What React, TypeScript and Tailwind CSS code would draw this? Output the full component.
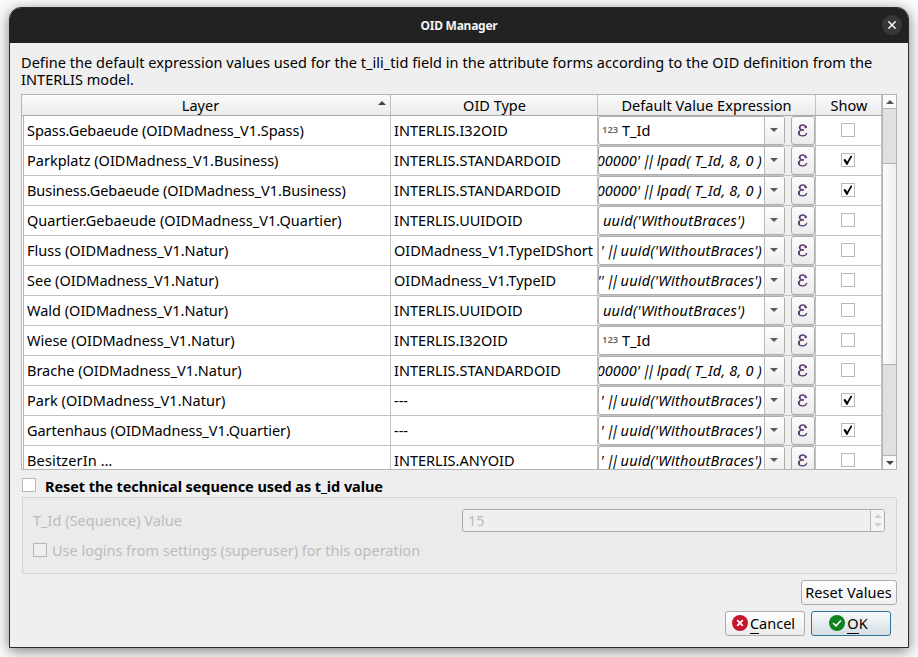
import type { ReactNode } from "react";

type Kind = "field" | "lpad" | "uuid" | "prefixed";

interface Row {
  layer: string;
  layerClass?: string;
  oid: string;
  kind: Kind;
  prefix?: string;
  show: boolean;
}

const rows: Row[] = [
  { layer: "Spass.Gebaeude (OIDMadness_V1.Spass)", layerClass: "tracking-[-0.06px]", oid: "INTERLIS.I32OID", kind: "field", show: false },
  { layer: "Parkplatz (OIDMadness_V1.Business)", oid: "INTERLIS.STANDARDOID", kind: "lpad", show: true },
  { layer: "Business.Gebaeude (OIDMadness_V1.Business)", layerClass: "tracking-[-0.06px]", oid: "INTERLIS.STANDARDOID", kind: "lpad", show: true },
  { layer: "Quartier.Gebaeude (OIDMadness_V1.Quartier)", layerClass: "tracking-[0.04px]", oid: "INTERLIS.UUIDOID", kind: "uuid", show: false },
  { layer: "Fluss (OIDMadness_V1.Natur)", oid: "OIDMadness_V1.TypeIDShort", kind: "prefixed", prefix: "'", show: false },
  { layer: "See (OIDMadness_V1.Natur)", oid: "OIDMadness_V1.TypeID", kind: "prefixed", prefix: "''", show: false },
  { layer: "Wald (OIDMadness_V1.Natur)", oid: "INTERLIS.UUIDOID", kind: "uuid", show: false },
  { layer: "Wiese (OIDMadness_V1.Natur)", oid: "INTERLIS.I32OID", kind: "field", show: false },
  { layer: "Brache (OIDMadness_V1.Natur)", oid: "INTERLIS.STANDARDOID", kind: "lpad", show: false },
  { layer: "Park (OIDMadness_V1.Natur)", layerClass: "tracking-[0.02px]", oid: "---", kind: "prefixed", prefix: "'", show: true },
  { layer: "Gartenhaus (OIDMadness_V1.Quartier)", layerClass: "tracking-[-0.04px]", oid: "---", kind: "prefixed", prefix: "'", show: true },
  { layer: "BesitzerIn …", layerClass: "tracking-[0.15px]", oid: "INTERLIS.ANYOID", kind: "prefixed", prefix: "'", show: false },
];

function Arrow({ up = false, className = "" }: { up?: boolean; className?: string }) {
  return (
    <svg width="8" height="4" viewBox="0 0 8 4" className={className} fill="currentColor">
      <path d={up ? "M0 4 L4 0 L8 4Z" : "M0 0 L8 0 L4 4Z"} />
    </svg>
  );
}

function CheckBox({ checked = false, className = "bg-white border-[#b9b9b9]" }: { checked?: boolean; className?: string }) {
  return (
    <span className={`flex size-3.5 shrink-0 items-center justify-center border ${className}`}>
      {checked && (
        <svg width="10" height="10" viewBox="0 0 10 10" fill="none" stroke="#000" strokeLinecap="round" strokeLinejoin="round">
          <path d="M1.8 5.2 L4 8.6" strokeWidth="2.3" />
          <path d="M4 8.6 L8.2 1.5" strokeWidth="1.7" />
        </svg>
      )}
    </span>
  );
}

function Concat() {
  return <span className="ml-[3px] mr-[5px] inline-block -skew-x-12 not-italic tracking-[-3.6px]">||</span>;
}

function Expression({ row }: { row: Row }) {
  if (row.kind === "field") {
    return (
      <>
        <span className="mb-0.5 w-5 shrink-0 text-[9.5px] font-semibold leading-none text-[#666]">123</span>
        <span>T_Id</span>
      </>
    );
  }
  if (row.kind === "uuid") {
    return <span className="shrink-0 pl-px italic tracking-[0.22px]">uuid('WithoutBraces')</span>;
  }
  return (
    <span className="flex shrink-0 italic">
      <span>{row.kind === "lpad" ? "00000'" : row.prefix}</span>
      <Concat />
      <span className="tracking-[0.2px]">{row.kind === "lpad" ? "lpad( T_Id, 8, 0 )" : "uuid('WithoutBraces')"}</span>
    </span>
  );
}

function Combo({ row }: { row: Row }) {
  const rightAligned = row.kind === "lpad" || row.kind === "prefixed";
  return (
    <div className="flex h-[29px] w-[187px] rounded-[3px] border border-[#adadad] bg-white">
      <div className={`flex w-[165px] shrink-0 items-center overflow-hidden whitespace-nowrap ${rightAligned ? "justify-end pr-0.5" : "pl-[3px]"}`}>
        <Expression row={row} />
      </div>
      <div className="flex flex-1 items-center justify-center rounded-r-[2px] border-l border-[#b9b9b9] bg-linear-to-b from-white to-[#ececec] pr-0.5">
        <Arrow className="mb-px text-[#595959]" />
      </div>
    </div>
  );
}

function EpsilonIcon() {
  return (
    <svg width="11" height="13" viewBox="0 0 11 13" className="mb-px mr-0.5" fill="none" stroke="#5d3b73" strokeLinecap="round">
      <path d="M8.8 3.2 C8.4 1.5 7.2 1 5.8 1 C3.8 1 2.6 2 2.6 3.5 C2.6 5.2 4 5.9 6.4 5.9" strokeWidth="1.3" />
      <path d="M6.4 5.9 C3.4 5.9 1.8 6.9 1.8 8.9 C1.8 10.8 3.4 11.8 5.6 11.8 C7.8 11.8 9.2 10.9 9.6 9.3" strokeWidth="1.3" />
      <path d="M2.7 2.9 V4.1 M2 8 V9.8" strokeWidth="1.9" />
      <circle cx="8.6" cy="3.1" r="0.8" fill="#5d3b73" />
    </svg>
  );
}

function HeaderCell({ children, className }: { children: ReactNode; className: string }) {
  return <div className={`flex items-center justify-center ${className}`}>{children}</div>;
}

function PushButton({ children, className }: { children: ReactNode; className: string }) {
  return <button className={`flex h-[25px] items-center justify-center rounded-[3px] border ${className}`}>{children}</button>;
}

export default function App() {
  return (
    <div className="h-[657px] w-[918px] overflow-hidden bg-[#fbfbfb] pl-[9px] pt-[7px] font-['Noto_Sans',sans-serif] text-[14.5px] leading-[17px] text-black">
      <div className="flex h-[641px] w-[900px] flex-col overflow-hidden rounded-t-xl border border-[#2b2b2b] bg-[#efefef] shadow-[0_3px_14px_rgba(0,0,0,0.5)]">
        <header className="grid h-[35px] shrink-0 grid-cols-[40px_1fr_40px] items-center bg-[#222]">
          <span />
          <h1 className="text-center text-[12px] font-bold tracking-[-0.25px] text-[#f4f4f4]">OID Manager</h1>
          <button className="mb-px ml-[14px] flex size-5 items-center justify-center rounded-full bg-[#383838]">
            <svg width="8" height="8" viewBox="0 0 8 8" stroke="#fff" strokeWidth="1.4">
              <path d="M0.4 0.4 L7.6 7.6 M7.6 0.4 L0.4 7.6" />
            </svg>
          </button>
        </header>

        <main className="flex flex-1 flex-col px-[11px] pt-[11px]">
          <p className="h-10 w-[860px] tracking-[0.045px]">
            Define the default expression values used for the t_ili_tid field in the attribute forms according to the OID definition from the
            INTERLIS model.
          </p>

          <section className="flex h-[376px] shrink-0 border border-[#b3b3b3] bg-white">
            <div className="flex w-[860px] shrink-0 flex-col overflow-hidden">
              <div className="flex h-[21px] shrink-0 border-b border-[#a9a9a9] bg-linear-to-b from-[#fafafa] to-[#ebebeb]">
                <HeaderCell className="w-[369px] border-r border-[#c2c2c2] pr-1">
                  <span className="flex-1 pl-px text-center">Layer</span>
                  <Arrow up className="mb-1 text-[#444]" />
                </HeaderCell>
                <HeaderCell className="w-[207px] border-r border-[#c2c2c2] pl-px">OID Type</HeaderCell>
                <HeaderCell className="w-[218px] border-r border-[#c2c2c2] tracking-[0.06px]">Default Value Expression</HeaderCell>
                <HeaderCell className="w-[66px] border-r border-[#c2c2c2] pl-px">Show</HeaderCell>
              </div>
              <div className="ml-px min-h-0 flex-1 overflow-hidden border-l border-[#b3b3b3]">
                {rows.map((row, i) => (
                  <div key={i} className="flex h-[30px]">
                    <div className="flex w-[367px] shrink-0 items-center whitespace-nowrap border-b border-r border-[#c2c2c2] pl-[3px]">
                      <span className={row.layerClass}>{row.layer}</span>
                    </div>
                    <div className="flex w-[207px] shrink-0 items-center whitespace-nowrap border-b border-r border-[#c2c2c2] pl-[3px]">
                      <span>{row.oid}</span>
                    </div>
                    <div className="flex w-[218px] shrink-0 justify-between border-b border-r border-[#c2c2c2] bg-[#efefef]">
                      <Combo row={row} />
                      <button className="flex h-[29px] w-6 items-center justify-center rounded-[3px] border border-[#adadad] bg-linear-to-b from-[#fcfcfc] to-[#ebebeb]">
                        <EpsilonIcon />
                      </button>
                    </div>
                    <div className="flex w-[66px] shrink-0 items-center justify-center border-b border-r border-[#c2c2c2] pb-px pr-px">
                      <CheckBox checked={row.show} />
                    </div>
                  </div>
                ))}
              </div>
            </div>
            <div className="flex w-3.5 flex-col border-l border-[#b3b3b3]">
              <div className="flex h-3.5 items-center justify-center border-b border-[#b3b3b3] bg-[#fafafa]">
                <Arrow up className="text-[#555]" />
              </div>
              <div className="h-[54px] bg-[#e0e0e0]" />
              <div className="h-[202px] border-y border-[#b3b3b3] bg-linear-to-r from-[#fafafa] to-[#efefef]" />
              <div className="flex-1 bg-[#e0e0e0]" />
              <div className="flex h-3.5 items-center justify-center border-t border-[#b3b3b3] bg-[#fafafa]">
                <Arrow className="text-[#444]" />
              </div>
            </div>
          </section>

          <label className="flex h-[27px] shrink-0 items-center gap-[9px] whitespace-nowrap pl-px pt-1.5 font-bold">
            <CheckBox className="mb-[3px] border-[#b9b9b9] bg-white" />
            <span className="tracking-[-0.08px]">Reset the technical sequence used as t_id value</span>
          </label>

          <section className="ml-px h-[77px] shrink-0 rounded-[2px] border border-[#d3d3d3] bg-[#ebebeb] pl-2.5 pr-[11px] pt-[11px] text-[#bcbcbc]">
            <div className="flex h-[23px] items-center justify-between">
              <span className="tracking-[0.03px]">T_Id (Sequence) Value</span>
              <div className="flex h-[23px] w-[423px] rounded-[3px] border border-[#ababab] bg-[#efefef]">
                <span className="flex flex-1 items-center pl-[5px]">15</span>
                <div className="flex w-3.5 flex-col items-center justify-center gap-[5px] rounded-r-[2px] border-l border-[#b9b9b9] bg-[#f4f4f4] text-[#cfcfcf]">
                  <Arrow up />
                  <Arrow />
                </div>
              </div>
            </div>
            <label className="mt-[7px] flex h-[22px] items-center gap-[5px] whitespace-nowrap">
              <CheckBox className="border-[#b9b9b9] bg-[#efefef]" />
              <span className="tracking-[-0.02px]">Use logins from settings (superuser) for this operation</span>
            </label>
          </section>

          <div className="mt-1.5 flex justify-end">
            <PushButton className="w-24 border-[#ababab] bg-linear-to-b from-white to-[#f0f0f0] pr-px tracking-[0.08px]">Reset Values</PushButton>
          </div>
          <div className="mt-1.5 flex justify-end gap-1.5 pr-1.5">
            <PushButton className="w-20 gap-0.5 border-[#ababab] bg-linear-to-b from-white to-[#ececec] pr-[3px]">
              <svg width="16" height="16" viewBox="0 0 16 16" className="mb-px">
                <circle cx="8" cy="8" r="8" fill="#c7162b" />
                <path d="M5.2 5.2 L10.8 10.8 M10.8 5.2 L5.2 10.8" stroke="#fff" strokeWidth="1.8" />
              </svg>
              <span><span className="border-b border-black">C</span>ancel</span>
            </PushButton>
            <PushButton className="w-20 gap-0.5 border-[#2d7399] bg-linear-to-b from-[#f7fafc] to-[#d6dee3] pr-[5px]">
              <svg width="16" height="16" viewBox="0 0 16 16" className="mb-px">
                <circle cx="8" cy="8" r="8" fill="#0e8420" />
                <path d="M4 8 L7 10.8 L12 5.5" fill="none" stroke="#fff" strokeWidth="1.6" />
              </svg>
              <span><span className="border-b border-black">O</span>K</span>
            </PushButton>
          </div>
        </main>
      </div>
    </div>
  );
}
